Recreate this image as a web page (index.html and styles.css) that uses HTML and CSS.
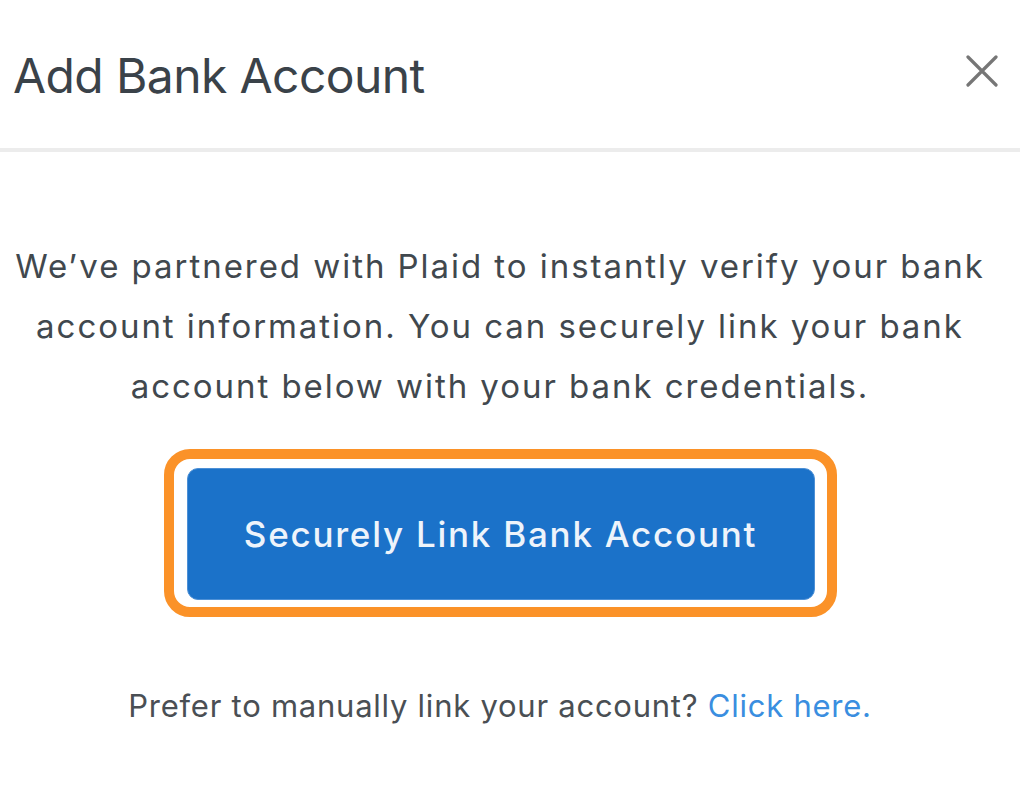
FILE: index.html
```html
<!DOCTYPE html>
<html lang="en">
<head>
<meta charset="utf-8">
<title>Add Bank Account</title>
<link rel="stylesheet" href="styles.css">
</head>
<body>
<div class="modal">
  <header class="modal-header">
    <h1 class="modal-title">Add Bank Account</h1>
    <button class="close-btn" aria-label="Close">
      <svg viewBox="0 0 32 32" width="32" height="32"><path d="M2 2 L30 30 M30 2 L2 30" stroke="#767676" stroke-width="3.2" stroke-linecap="round" fill="none"/></svg>
    </button>
  </header>
  <section class="modal-body">
    <p class="intro">We’ve partnered with Plaid to instantly verify your bank<br>account information. You can securely link your bank<br>account below with your bank credentials.</p>
    <div class="highlight">
      <button class="link-btn">Securely Link Bank Account</button>
    </div>
    <p class="manual">Prefer to manually link your account? <a href="#" class="manual-link">Click here.</a></p>
  </section>
</div>
</body>
</html>
```
FILE: styles.css
```css
html, body {
  margin: 0;
  padding: 0;
  background: #ffffff;
}
body {
  font-family: Inter, "Noto Sans", sans-serif;
  width: 1020px;
  height: 798px;
  overflow: hidden;
}
.modal {
  display: flex;
  flex-direction: column;
}
.modal-header {
  display: flex;
  align-items: center;
  justify-content: space-between;
  padding: 0 22px 0 13px;
  border-bottom: 4px solid #ececec;
  box-sizing: border-box;
  height: 152px;
}
.modal-title {
  margin: 0 0 -2px 0;
  font-size: 48px;
  font-weight: 400;
  color: #3a4249;
  letter-spacing: -0.6px;
}
.close-btn {
  background: none;
  border: 0;
  padding: 0;
  width: 32px;
  height: 32px;
  margin-bottom: 6px;
}
.close-btn svg { display: block; }
.modal-body {
  display: flex;
  flex-direction: column;
  align-items: center;
  padding: 84px 20px 0 0;
}
.intro {
  margin: 0;
  white-space: nowrap;
  text-align: center;
  font-size: 33px;
  line-height: 60px;
  letter-spacing: 1.95px;
  color: #41484e;
}
.highlight {
  margin-top: 33px;
  border: 10px solid #fb9228;
  border-radius: 26px;
  padding: 9px 12px 7px 13px;
  width: 673px;
  box-sizing: border-box;
}
.link-btn {
  display: block;
  width: 100%;
  height: 132px;
  background: #1b72c9;
  border: 1px solid #4d90d6;
  border-radius: 11px;
  color: #eef4fb;
  font-family: Inter, "Noto Sans", sans-serif;
  font-size: 35px;
  font-weight: 500;
  letter-spacing: 1.75px;
}
.manual {
  margin: 70px 0 0 0;
  font-size: 31px;
  letter-spacing: 0.75px;
  color: #4a4f54;
}
.manual-link {
  color: #3a8ee0;
  text-decoration: none;
}
```
